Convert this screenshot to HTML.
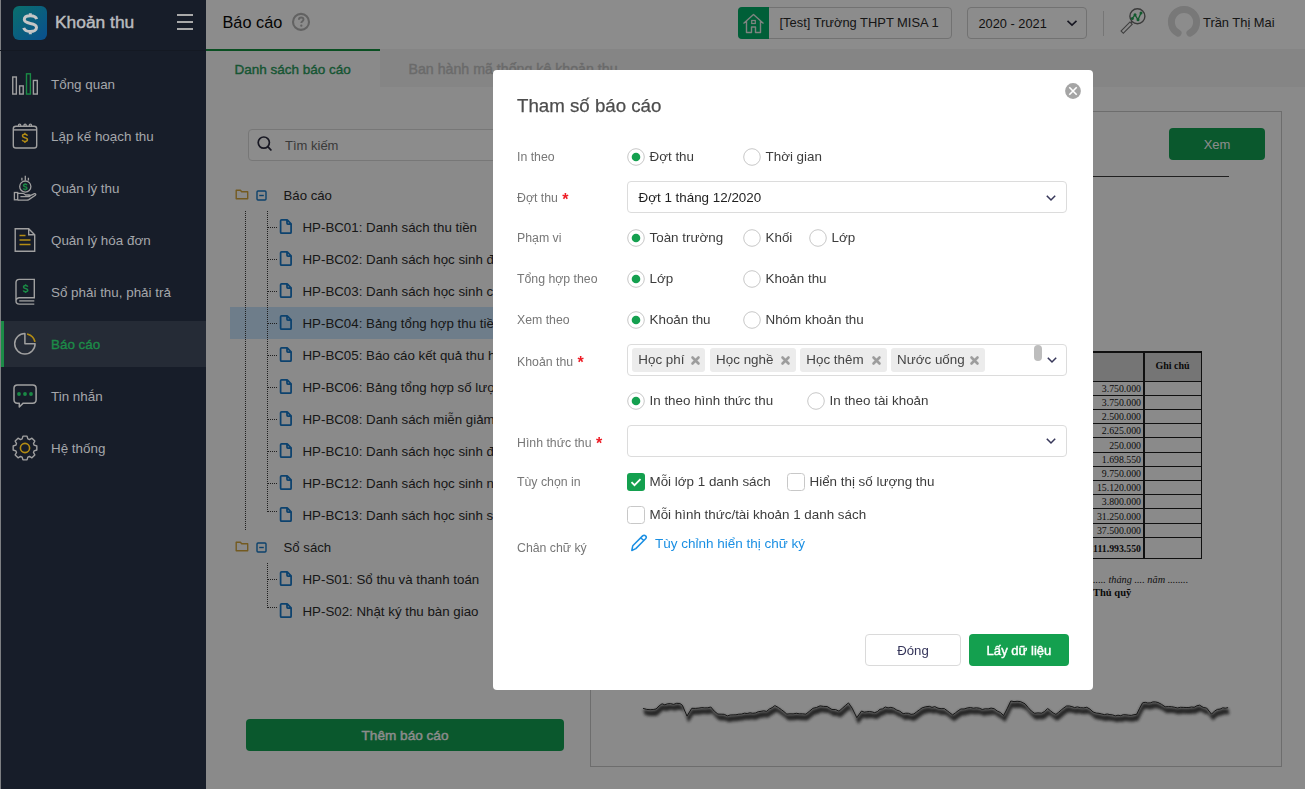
<!DOCTYPE html>
<html><head><meta charset="utf-8">
<style>
*{box-sizing:border-box;margin:0;padding:0}
html,body{width:1305px;height:789px;overflow:hidden}
body{position:relative;font-family:"Liberation Sans",sans-serif;font-size:13px;color:#212121;background:#fcfcfc}
.a{position:absolute}
.t{position:absolute;white-space:nowrap;line-height:16px}
svg{position:absolute;overflow:visible}
#sb{left:0;top:0;width:206px;height:789px;background:#171d29;z-index:5}
#sb .mi{position:absolute;left:51px;font-size:13.4px;color:#a5a7ab;line-height:16px;white-space:nowrap}
#hdr{left:206px;top:0;width:1099px;height:49px;background:#fff;box-shadow:0 1px 1px rgba(0,0,0,.10)}
#tabs{left:206px;top:49px;width:1099px;height:38px;background:#f2f2f2}
#ov{left:0;top:0;width:1305px;height:789px;background:rgba(0,0,0,.45);z-index:3}
#modal{left:493px;top:70px;width:600px;height:620px;background:#fff;border-radius:4px;z-index:10;will-change:transform}
</style></head>
<body>
<!-- SIDEBAR -->
<div id="sb" class="a">
  <div class="a" style="left:0;top:0;width:1px;height:789px;background:#7d7f82"></div>
  <div class="a" style="left:0;top:50px;width:206px;height:1px;background:#141923"></div>
  <div class="a" style="left:13px;top:6px;width:34px;height:34px;border-radius:6px;background:linear-gradient(135deg,#0a706c 0%,#0a5d80 55%,#0a4f8e 100%)"></div>
  <svg style="left:13px;top:6px" width="34" height="34" viewBox="0 0 34 34"><path d="M23.6 13.2c-0.5-2-2.8-3.4-6.3-3.4c-3.6 0-6 1.5-6 3.8c0 2.5 2.5 3.2 6 3.8c3.6 0.6 6.2 1.3 6.2 4.1c0 2.4-2.6 4-6.2 4c-3.6 0-5.9-1.4-6.6-3.6M17.3 7.2v3M17.3 25.5v2.8" fill="none" stroke="#c6c6c6" stroke-width="3"/></svg>
  <div class="t" style="left:55px;top:11px;font-size:17.4px;-webkit-text-stroke:0.45px #b9bbbf;color:#b9bbbf;line-height:22px">Khoản thu</div>
  <div class="a" style="left:177px;top:14px;width:16px;height:2.4px;background:#a9a9a9"></div>
  <div class="a" style="left:177px;top:20.8px;width:16px;height:2.4px;background:#a9a9a9"></div>
  <div class="a" style="left:177px;top:27.6px;width:16px;height:2.4px;background:#a9a9a9"></div>

  <!-- active bg -->
  <div class="a" style="left:1px;top:321px;width:205px;height:46px;background:#252b36"></div>
  <div class="a" style="left:1px;top:321px;width:3px;height:46px;background:#1b8c47"></div>

  <!-- icons -->
  <svg style="left:0;top:0" width="206" height="470" viewBox="0 0 206 470" fill="none" stroke-width="1.4">
    <!-- Tong quan bars -->
    <rect x="12.75" y="77" width="3.6" height="17.05" stroke="#a0a0a0"/>
    <rect x="19.6" y="85.9" width="3.6" height="8.15" stroke="#a0a0a0"/>
    <rect x="26.5" y="73.8" width="3.9" height="20.25" stroke="#1a8a45"/>
    <rect x="33.4" y="80.45" width="3.9" height="13.6" stroke="#a0a0a0"/>
    <!-- calendar -->
    <rect x="13.3" y="126.2" width="23.4" height="21.8" rx="2.6" stroke="#a0a0a0" stroke-width="1.4"/>
    <path d="M13.3 129.9h23.4" stroke="#a0a0a0" stroke-width="1.4"/>
    <circle cx="19.6" cy="125.3" r="1.2" stroke="#a0a0a0" stroke-width="1.2"/><circle cx="25.1" cy="125.3" r="1.2" stroke="#a0a0a0" stroke-width="1.2"/><circle cx="30.4" cy="125.3" r="1.2" stroke="#a0a0a0" stroke-width="1.2"/>
    <path transform="translate(21.9,133.6) scale(0.6)" d="M9.2 3.4C8.7 1.9 7.2 1 5 1C2.6 1 1 2.1 1 3.9C1 5.9 2.8 6.4 5 6.9C7.5 7.4 9.2 8.1 9.2 10.3C9.2 12.1 7.5 13 5 13C2.5 13 0.9 12 0.6 10.5M5 -1.6V1M5 13V15.6" stroke="#b38c14" stroke-width="1.5" vector-effect="non-scaling-stroke"/>
    <!-- hand coin -->
    <circle cx="25.3" cy="186.6" r="5.6" stroke="#a0a0a0" stroke-width="1.3"/>
    <path transform="translate(23.1,183.9) scale(0.42)" d="M9.2 3.4C8.7 1.9 7.2 1 5 1C2.6 1 1 2.1 1 3.9C1 5.9 2.8 6.4 5 6.9C7.5 7.4 9.2 8.1 9.2 10.3C9.2 12.1 7.5 13 5 13C2.5 13 0.9 12 0.6 10.5M5 -1.6V1M5 13V15.6" stroke="#1a8a45" stroke-width="1.4" vector-effect="non-scaling-stroke"/>
    <path d="M21.9 177.8v2.8M25.3 175.8v4.8M28.4 177.8v2.8" stroke="#a0a0a0" stroke-width="1.3"/>
    <rect x="14.4" y="192.5" width="3.3" height="7.3" stroke="#a0a0a0" stroke-width="1.3"/>
    <path d="M17.7 193.4h4.6c1.4 0 2.4 0.7 3.3 1.6h3.6c1.1 0 1.1 1.6 0 1.6h-8.8M28.6 196.3l5.9-2.6c1-0.4 1.8 0.9 0.9 1.5l-6.6 4.4c-0.5 0.3-1.1 0.5-1.7 0.5h-9.4" stroke="#a0a0a0" stroke-width="1.3" stroke-linejoin="round"/>
    <!-- document -->
    <path d="M15.2 228.7h13.5l6 6v16.5h-19.5z M28.7 228.7v6h6" stroke="#a0a0a0"/>
    <path d="M19.5 235.5h6M19.5 240h11M19.5 244.5h11" stroke="#b38c14" stroke-width="1.5"/>
    <!-- book -->
    <path d="M16 301V282.6c0-1.8 1.4-3.2 3.2-3.2h15.1v18.3H19.3c-1.8 0-3.3 1.5-3.3 3.3c0 1.8 1.5 3.1 3.3 3.1h15" stroke="#a0a0a0" stroke-width="1.4"/>
    <path d="M19.2 300.9h15.1" stroke="#a0a0a0" stroke-width="1.3"/>
    <path transform="translate(23,285) scale(0.52)" d="M9.2 3.4C8.7 1.9 7.2 1 5 1C2.6 1 1 2.1 1 3.9C1 5.9 2.8 6.4 5 6.9C7.5 7.4 9.2 8.1 9.2 10.3C9.2 12.1 7.5 13 5 13C2.5 13 0.9 12 0.6 10.5M5 -1.6V1M5 13V15.6" stroke="#1a8a45" stroke-width="1.5" vector-effect="non-scaling-stroke"/>
    <!-- pie -->
    <path d="M24.9 333.6a10.2 10.2 0 1 0 10.2 10.2h-10.2z" stroke="#a0a0a0" stroke-width="1.5" stroke-linejoin="round"/>
    <path d="M27.8 334.2a10 10 0 0 1 7 7" stroke="#b38c14" stroke-width="1.7" stroke-linecap="round"/>
    <!-- chat -->
    <path d="M17.4 384.95h15.3c2.1 0 3.4 1.3 3.4 3.4v11.4c0 2.1-1.3 3.4-3.4 3.4h-9.5l-3.9 3.8v-3.8h-1.9c-2.1 0-3.4-1.3-3.4-3.4v-11.4c0-2.1 1.3-3.4 3.4-3.4z" stroke="#a0a0a0" stroke-width="1.5" stroke-linejoin="round"/>
    <circle cx="19" cy="394" r="1.9" fill="#1a8a45" stroke="none"/>
    <circle cx="25" cy="394" r="1.9" fill="#1a8a45" stroke="none"/>
    <circle cx="31" cy="394" r="1.9" fill="#1a8a45" stroke="none"/>
    <!-- gear -->
    <path id="gear" d="M34.17 445.16 L36.83 445.97 L36.83 450.03 L34.17 450.84 L33.49 452.48 L34.80 454.93 L31.93 457.80 L29.48 456.49 L27.84 457.17 L27.03 459.83 L22.97 459.83 L22.16 457.17 L20.52 456.49 L18.07 457.80 L15.20 454.93 L16.51 452.48 L15.83 450.84 L13.17 450.03 L13.17 445.97 L15.83 445.16 L16.51 443.52 L15.20 441.07 L18.07 438.20 L20.52 439.51 L22.16 438.83 L22.97 436.17 L27.03 436.17 L27.84 438.83 L29.48 439.51 L31.93 438.20 L34.80 441.07 L33.49 443.52Z" stroke="#a0a0a0" stroke-width="1.4" stroke-linejoin="round"/>
    <circle cx="25" cy="448" r="4.6" stroke="#b38c14" stroke-width="1.6"/>
  </svg>

  <div class="mi" style="top:77px">Tổng quan</div>
  <div class="mi" style="top:129px">Lập kế hoạch thu</div>
  <div class="mi" style="top:181px">Quản lý thu</div>
  <div class="mi" style="top:233px">Quản lý hóa đơn</div>
  <div class="mi" style="top:285px">Sổ phải thu, phải trả</div>
  <div class="mi" style="top:337px;color:#1c8c48;-webkit-text-stroke:0.35px #1c8c48">Báo cáo</div>
  <div class="mi" style="top:389px">Tin nhắn</div>
  <div class="mi" style="top:441px">Hệ thống</div>
</div>

<!-- HEADER -->
<div id="hdr" class="a"></div>
<div class="t" style="left:222.5px;top:11px;font-size:16.3px;line-height:22px;color:#080808">Báo cáo</div>
<svg style="left:291px;top:12px" width="20" height="20" viewBox="0 0 20 20"><circle cx="10" cy="9.9" r="8" fill="none" stroke="#b3b3b3" stroke-width="2.1"/><path d="M7.9 7.7c0-1.4 1-2.2 2.3-2.2s2.3 0.8 2.3 2c0 1.7-2.2 1.7-2.2 3.6" fill="none" stroke="#b3b3b3" stroke-width="1.9"/><circle cx="10.3" cy="13.7" r="1.15" fill="#b3b3b3"/></svg>
<!-- school selector -->
<div class="a" style="left:737.5px;top:7px;width:214px;height:31.5px;border:1px solid #cfcfcf;border-radius:4px;background:#fff"></div>
<div class="a" style="left:738px;top:7px;width:31px;height:31.5px;background:#00ad67;border-radius:4px 0 0 4px"></div>
<svg style="left:738px;top:7px" width="31" height="32" viewBox="0 0 31 32"><path d="M5.5 16.5l10-9 10 9M8.5 14v11.5h5v-5.5h4v5.5h5v-11.5" fill="none" stroke="#e8efe9" stroke-width="1.4" stroke-linejoin="round"/><rect x="13.7" y="13.5" width="3.6" height="3" fill="none" stroke="#e8efe9" stroke-width="1.2"/></svg>
<div class="t" style="left:779.5px;top:14px;font-size:12.9px;line-height:18px;color:#2a2a2a">[Test] Trường THPT MISA 1</div>
<!-- year -->
<div class="a" style="left:967px;top:7px;width:120px;height:31.5px;border:1px solid #cfcfcf;border-radius:4px;background:#fff"></div>
<div class="t" style="left:978.5px;top:15px;font-size:12.8px;line-height:18px;color:#1f1f1f">2020 - 2021</div>
<svg style="left:1066px;top:19px" width="12" height="8" viewBox="0 0 12 8"><path d="M1.5 1.8l4.5 4.3 4.5-4.3" fill="none" stroke="#2b2b3f" stroke-width="1.6"/></svg>
<div class="a" style="left:1103px;top:11px;width:1px;height:25px;background:#d8d8d8"></div>
<!-- search chart icon -->
<svg style="left:1110px;top:2px" width="40" height="40" viewBox="0 0 40 40"><circle cx="27.4" cy="14.2" r="7.5" fill="none" stroke="#6b6b6b" stroke-width="1.4"/><path d="M22.3 19.3l-1.3 1.3" stroke="#6b6b6b" stroke-width="1.6"/><rect x="-1.6" y="0" width="3.2" height="12.6" fill="none" stroke="#737373" stroke-width="1.1" transform="translate(21.1,21.2) rotate(45)"/><path d="M22.3 16.4L25 12.8L28 17.8L31 11" fill="none" stroke="#22a352" stroke-width="1.3"/><circle cx="22.3" cy="16.4" r="1.5" fill="#22a352"/><circle cx="25" cy="12.8" r="1.5" fill="#22a352"/><circle cx="28" cy="17.8" r="1.5" fill="#22a352"/><circle cx="31" cy="11" r="1.5" fill="#22a352"/></svg>
<!-- avatar -->
<svg style="left:1167px;top:6px" width="34" height="32" viewBox="0 0 34 32"><path d="M11.08 27.13A12.6 12.6 0 1 1 22.92 27.13" fill="none" stroke="#dadada" stroke-width="7" stroke-linecap="round"/></svg>
<div class="t" style="left:1203px;top:14px;font-size:12.9px;line-height:18px;color:#2a2a2a">Trần Thị Mai</div>

<!-- TABS -->
<div id="tabs" class="a"></div>
<div class="a" style="left:206px;top:49px;width:174px;height:38px;background:#fcfcfc;border-top:2px solid #13913f"></div>
<div class="t" style="left:234.5px;top:62px;font-size:13.5px;-webkit-text-stroke:0.4px #2a9b5c;color:#2a9b5c">Danh sách báo cáo</div>
<div class="t" style="left:408.5px;top:61px;font-size:14.2px;-webkit-text-stroke:0.4px #c2c2c2;color:#c2c2c2">Ban hành mã thống kê khoản thu</div>
<div class="a" style="left:206px;top:87px;width:1099px;height:702px;background:#fcfcfc"></div>

<!-- LEFT PANEL -->
<div class="a" style="left:248px;top:129px;width:330px;height:32px;border:1px solid #d9d9d9;border-radius:4px;background:#fff"></div>
<svg style="left:256px;top:135px" width="18" height="18" viewBox="0 0 18 18"><circle cx="7.8" cy="7.6" r="5.6" fill="none" stroke="#2d2d40" stroke-width="1.7"/><path d="M11.8 11.7l3.6 3.8" stroke="#2d2d40" stroke-width="1.8"/></svg>
<div class="t" style="left:285px;top:137.6px;font-size:13px;color:#6b6b6b">Tìm kiếm</div>
<div class="a" style="left:230px;top:307px;width:300px;height:32px;background:#c8e4fb"></div>
<svg style="left:235px;top:189px" width="14" height="11" viewBox="0 0 14 11"><path d="M1.2 1.2h4.2l1.3 1.5h6v7.1H1.2z" fill="none" stroke="#d1a43b" stroke-width="1.4" stroke-linejoin="round"/></svg>
<svg style="left:256px;top:190px" width="11" height="11" viewBox="0 0 11 11"><rect x="1" y="1" width="9" height="9" rx="1" fill="none" stroke="#1677c4" stroke-width="1.4"/><path d="M3.2 5.5h4.6" stroke="#1677c4" stroke-width="1.4"/></svg>
<div class="t" style="left:283.5px;top:187.7px;font-size:13.2px;color:#2b2b2b">Báo cáo</div>
<svg style="left:235px;top:541px" width="14" height="11" viewBox="0 0 14 11"><path d="M1.2 1.2h4.2l1.3 1.5h6v7.1H1.2z" fill="none" stroke="#d1a43b" stroke-width="1.4" stroke-linejoin="round"/></svg>
<svg style="left:256px;top:542px" width="11" height="11" viewBox="0 0 11 11"><rect x="1" y="1" width="9" height="9" rx="1" fill="none" stroke="#1677c4" stroke-width="1.4"/><path d="M3.2 5.5h4.6" stroke="#1677c4" stroke-width="1.4"/></svg>
<div class="t" style="left:283.5px;top:539.7px;font-size:13.2px;color:#2b2b2b">Sổ sách</div>
<div class="a" style="left:245px;top:211px;width:1px;height:320px;background-image:linear-gradient(#3a3a3a 50%,transparent 50%);background-size:1px 2px"></div>
<div class="a" style="left:267px;top:211px;width:1px;height:301px;background-image:linear-gradient(#3a3a3a 50%,transparent 50%);background-size:1px 2px"></div>
<div class="a" style="left:267px;top:563px;width:1px;height:45px;background-image:linear-gradient(#3a3a3a 50%,transparent 50%);background-size:1px 2px"></div>
<div class="a" style="left:268px;top:227px;width:9px;height:1px;background-image:linear-gradient(90deg,#3a3a3a 50%,transparent 50%);background-size:2px 1px"></div>
<svg style="left:279px;top:218px" width="14" height="17" viewBox="0 0 14 17"><path d="M2.6 1.8h5.6l3.9 4v8.4c0 0.6-0.4 1-1 1H2.6c-0.6 0-1-0.4-1-1V2.8c0-0.6 0.4-1 1-1zM8 2v3.2c0 0.5 0.3 0.8 0.8 0.8h3.2" fill="none" stroke="#1778c8" stroke-width="1.75" stroke-linejoin="round"/></svg>
<div class="t" style="left:302.5px;top:219.7px;font-size:13.3px;color:#2b2b2b">HP-BC01: Danh sách thu tiền</div>
<div class="a" style="left:268px;top:259px;width:9px;height:1px;background-image:linear-gradient(90deg,#3a3a3a 50%,transparent 50%);background-size:2px 1px"></div>
<svg style="left:279px;top:250px" width="14" height="17" viewBox="0 0 14 17"><path d="M2.6 1.8h5.6l3.9 4v8.4c0 0.6-0.4 1-1 1H2.6c-0.6 0-1-0.4-1-1V2.8c0-0.6 0.4-1 1-1zM8 2v3.2c0 0.5 0.3 0.8 0.8 0.8h3.2" fill="none" stroke="#1778c8" stroke-width="1.75" stroke-linejoin="round"/></svg>
<div class="t" style="left:302.5px;top:251.7px;font-size:13.3px;color:#2b2b2b">HP-BC02: Danh sách học sinh đã nộp tiền</div>
<div class="a" style="left:268px;top:291px;width:9px;height:1px;background-image:linear-gradient(90deg,#3a3a3a 50%,transparent 50%);background-size:2px 1px"></div>
<svg style="left:279px;top:282px" width="14" height="17" viewBox="0 0 14 17"><path d="M2.6 1.8h5.6l3.9 4v8.4c0 0.6-0.4 1-1 1H2.6c-0.6 0-1-0.4-1-1V2.8c0-0.6 0.4-1 1-1zM8 2v3.2c0 0.5 0.3 0.8 0.8 0.8h3.2" fill="none" stroke="#1778c8" stroke-width="1.75" stroke-linejoin="round"/></svg>
<div class="t" style="left:302.5px;top:283.7px;font-size:13.3px;color:#2b2b2b">HP-BC03: Danh sách học sinh chưa nộp tiền</div>
<div class="a" style="left:268px;top:323px;width:9px;height:1px;background-image:linear-gradient(90deg,#3a3a3a 50%,transparent 50%);background-size:2px 1px"></div>
<svg style="left:279px;top:314px" width="14" height="17" viewBox="0 0 14 17"><path d="M2.6 1.8h5.6l3.9 4v8.4c0 0.6-0.4 1-1 1H2.6c-0.6 0-1-0.4-1-1V2.8c0-0.6 0.4-1 1-1zM8 2v3.2c0 0.5 0.3 0.8 0.8 0.8h3.2" fill="none" stroke="#1778c8" stroke-width="1.75" stroke-linejoin="round"/></svg>
<div class="t" style="left:302.5px;top:315.7px;font-size:13.3px;color:#2b2b2b">HP-BC04: Bảng tổng hợp thu tiền</div>
<div class="a" style="left:268px;top:355px;width:9px;height:1px;background-image:linear-gradient(90deg,#3a3a3a 50%,transparent 50%);background-size:2px 1px"></div>
<svg style="left:279px;top:346px" width="14" height="17" viewBox="0 0 14 17"><path d="M2.6 1.8h5.6l3.9 4v8.4c0 0.6-0.4 1-1 1H2.6c-0.6 0-1-0.4-1-1V2.8c0-0.6 0.4-1 1-1zM8 2v3.2c0 0.5 0.3 0.8 0.8 0.8h3.2" fill="none" stroke="#1778c8" stroke-width="1.75" stroke-linejoin="round"/></svg>
<div class="t" style="left:302.5px;top:347.7px;font-size:13.3px;color:#2b2b2b">HP-BC05: Báo cáo kết quả thu học phí</div>
<div class="a" style="left:268px;top:387px;width:9px;height:1px;background-image:linear-gradient(90deg,#3a3a3a 50%,transparent 50%);background-size:2px 1px"></div>
<svg style="left:279px;top:378px" width="14" height="17" viewBox="0 0 14 17"><path d="M2.6 1.8h5.6l3.9 4v8.4c0 0.6-0.4 1-1 1H2.6c-0.6 0-1-0.4-1-1V2.8c0-0.6 0.4-1 1-1zM8 2v3.2c0 0.5 0.3 0.8 0.8 0.8h3.2" fill="none" stroke="#1778c8" stroke-width="1.75" stroke-linejoin="round"/></svg>
<div class="t" style="left:302.5px;top:379.7px;font-size:13.3px;color:#2b2b2b">HP-BC06: Bảng tổng hợp số lượng</div>
<div class="a" style="left:268px;top:419px;width:9px;height:1px;background-image:linear-gradient(90deg,#3a3a3a 50%,transparent 50%);background-size:2px 1px"></div>
<svg style="left:279px;top:410px" width="14" height="17" viewBox="0 0 14 17"><path d="M2.6 1.8h5.6l3.9 4v8.4c0 0.6-0.4 1-1 1H2.6c-0.6 0-1-0.4-1-1V2.8c0-0.6 0.4-1 1-1zM8 2v3.2c0 0.5 0.3 0.8 0.8 0.8h3.2" fill="none" stroke="#1778c8" stroke-width="1.75" stroke-linejoin="round"/></svg>
<div class="t" style="left:302.5px;top:411.7px;font-size:13.3px;color:#2b2b2b">HP-BC08: Danh sách miễn giảm</div>
<div class="a" style="left:268px;top:451px;width:9px;height:1px;background-image:linear-gradient(90deg,#3a3a3a 50%,transparent 50%);background-size:2px 1px"></div>
<svg style="left:279px;top:442px" width="14" height="17" viewBox="0 0 14 17"><path d="M2.6 1.8h5.6l3.9 4v8.4c0 0.6-0.4 1-1 1H2.6c-0.6 0-1-0.4-1-1V2.8c0-0.6 0.4-1 1-1zM8 2v3.2c0 0.5 0.3 0.8 0.8 0.8h3.2" fill="none" stroke="#1778c8" stroke-width="1.75" stroke-linejoin="round"/></svg>
<div class="t" style="left:302.5px;top:443.7px;font-size:13.3px;color:#2b2b2b">HP-BC10: Danh sách học sinh đã nộp</div>
<div class="a" style="left:268px;top:483px;width:9px;height:1px;background-image:linear-gradient(90deg,#3a3a3a 50%,transparent 50%);background-size:2px 1px"></div>
<svg style="left:279px;top:474px" width="14" height="17" viewBox="0 0 14 17"><path d="M2.6 1.8h5.6l3.9 4v8.4c0 0.6-0.4 1-1 1H2.6c-0.6 0-1-0.4-1-1V2.8c0-0.6 0.4-1 1-1zM8 2v3.2c0 0.5 0.3 0.8 0.8 0.8h3.2" fill="none" stroke="#1778c8" stroke-width="1.75" stroke-linejoin="round"/></svg>
<div class="t" style="left:302.5px;top:475.7px;font-size:13.3px;color:#2b2b2b">HP-BC12: Danh sách học sinh nợ</div>
<div class="a" style="left:268px;top:511px;width:9px;height:1px;background-image:linear-gradient(90deg,#3a3a3a 50%,transparent 50%);background-size:2px 1px"></div>
<svg style="left:279px;top:506px" width="14" height="17" viewBox="0 0 14 17"><path d="M2.6 1.8h5.6l3.9 4v8.4c0 0.6-0.4 1-1 1H2.6c-0.6 0-1-0.4-1-1V2.8c0-0.6 0.4-1 1-1zM8 2v3.2c0 0.5 0.3 0.8 0.8 0.8h3.2" fill="none" stroke="#1778c8" stroke-width="1.75" stroke-linejoin="round"/></svg>
<div class="t" style="left:302.5px;top:507.7px;font-size:13.3px;color:#2b2b2b">HP-BC13: Danh sách học sinh sử dụng</div>
<div class="a" style="left:268px;top:579px;width:9px;height:1px;background-image:linear-gradient(90deg,#3a3a3a 50%,transparent 50%);background-size:2px 1px"></div>
<svg style="left:279px;top:570px" width="14" height="17" viewBox="0 0 14 17"><path d="M2.6 1.8h5.6l3.9 4v8.4c0 0.6-0.4 1-1 1H2.6c-0.6 0-1-0.4-1-1V2.8c0-0.6 0.4-1 1-1zM8 2v3.2c0 0.5 0.3 0.8 0.8 0.8h3.2" fill="none" stroke="#1778c8" stroke-width="1.75" stroke-linejoin="round"/></svg>
<div class="t" style="left:302.5px;top:571.7px;font-size:13.3px;color:#2b2b2b">HP-S01: Sổ thu và thanh toán</div>
<div class="a" style="left:268px;top:607px;width:9px;height:1px;background-image:linear-gradient(90deg,#3a3a3a 50%,transparent 50%);background-size:2px 1px"></div>
<svg style="left:279px;top:602px" width="14" height="17" viewBox="0 0 14 17"><path d="M2.6 1.8h5.6l3.9 4v8.4c0 0.6-0.4 1-1 1H2.6c-0.6 0-1-0.4-1-1V2.8c0-0.6 0.4-1 1-1zM8 2v3.2c0 0.5 0.3 0.8 0.8 0.8h3.2" fill="none" stroke="#1778c8" stroke-width="1.75" stroke-linejoin="round"/></svg>
<div class="t" style="left:302.5px;top:603.7px;font-size:13.3px;color:#2b2b2b">HP-S02: Nhật ký thu bàn giao</div>
<div class="a" style="left:246px;top:719px;width:318px;height:32px;background:#13a052;border-radius:4px"></div>
<div class="t" style="left:246px;top:727.7px;width:318px;text-align:center;font-size:13.6px;-webkit-text-stroke:0.4px #fff;color:#fff">Thêm báo cáo</div>
<!-- RIGHT PANEL -->
<div class="a" style="left:590px;top:111px;width:692px;height:656px;border:1px solid #c6c6c6;background:#fcfcfc"></div>
<div class="a" style="left:1169px;top:128px;width:96px;height:32px;background:#13a052;border-radius:4px"></div>
<div class="t" style="left:1169px;top:137px;width:96px;text-align:center;font-size:13px;color:#fff">Xem</div>
<div class="a" style="left:643px;top:176px;width:586px;height:1px;background:#3a3a3a"></div>
<div class="a" style="left:1080px;top:352px;width:122px;height:29px;background:#d6d6d6"></div>
<div class="a" style="left:1080px;top:351px;width:122px;height:1.5px;background:#1e1e1e"></div>
<div class="a" style="left:1080px;top:381px;width:122px;height:1.3px;background:#1e1e1e"></div>
<div class="a" style="left:1080px;top:395px;width:122px;height:1.3px;background:#1e1e1e"></div>
<div class="a" style="left:1080px;top:409px;width:122px;height:1.3px;background:#1e1e1e"></div>
<div class="a" style="left:1080px;top:423px;width:122px;height:1.3px;background:#1e1e1e"></div>
<div class="a" style="left:1080px;top:437px;width:122px;height:1.3px;background:#1e1e1e"></div>
<div class="a" style="left:1080px;top:452px;width:122px;height:1.3px;background:#1e1e1e"></div>
<div class="a" style="left:1080px;top:466px;width:122px;height:1.3px;background:#1e1e1e"></div>
<div class="a" style="left:1080px;top:480px;width:122px;height:1.3px;background:#1e1e1e"></div>
<div class="a" style="left:1080px;top:494px;width:122px;height:1.3px;background:#1e1e1e"></div>
<div class="a" style="left:1080px;top:508px;width:122px;height:1.3px;background:#1e1e1e"></div>
<div class="a" style="left:1080px;top:523px;width:122px;height:1.3px;background:#1e1e1e"></div>
<div class="a" style="left:1080px;top:537px;width:122px;height:1.3px;background:#1e1e1e"></div>
<div class="a" style="left:1080px;top:558px;width:122px;height:1.3px;background:#1e1e1e"></div>
<div class="a" style="left:1143px;top:351px;width:1.6px;height:208px;background:#1e1e1e"></div>
<div class="a" style="left:1200.5px;top:351px;width:1.3px;height:208.3px;background:#1e1e1e"></div>
<div class="t" style="left:1144px;top:358px;width:57px;text-align:center;font-family:'Liberation Serif';font-weight:bold;font-size:10px;color:#111">Ghi chú</div>
<div class="t" style="left:1060px;top:381.2px;width:81px;text-align:right;font-family:'Liberation Serif';font-size:9.8px;color:#161616">3.750.000</div>
<div class="t" style="left:1060px;top:395.2px;width:81px;text-align:right;font-family:'Liberation Serif';font-size:9.8px;color:#161616">3.750.000</div>
<div class="t" style="left:1060px;top:409.2px;width:81px;text-align:right;font-family:'Liberation Serif';font-size:9.8px;color:#161616">2.500.000</div>
<div class="t" style="left:1060px;top:423.2px;width:81px;text-align:right;font-family:'Liberation Serif';font-size:9.8px;color:#161616">2.625.000</div>
<div class="t" style="left:1060px;top:437.7px;width:81px;text-align:right;font-family:'Liberation Serif';font-size:9.8px;color:#161616">250.000</div>
<div class="t" style="left:1060px;top:452.2px;width:81px;text-align:right;font-family:'Liberation Serif';font-size:9.8px;color:#161616">1.698.550</div>
<div class="t" style="left:1060px;top:466.2px;width:81px;text-align:right;font-family:'Liberation Serif';font-size:9.8px;color:#161616">9.750.000</div>
<div class="t" style="left:1060px;top:480.2px;width:81px;text-align:right;font-family:'Liberation Serif';font-size:9.8px;color:#161616">15.120.000</div>
<div class="t" style="left:1060px;top:494.2px;width:81px;text-align:right;font-family:'Liberation Serif';font-size:9.8px;color:#161616">3.800.000</div>
<div class="t" style="left:1060px;top:508.7px;width:81px;text-align:right;font-family:'Liberation Serif';font-size:9.8px;color:#161616">31.250.000</div>
<div class="t" style="left:1060px;top:523.2px;width:81px;text-align:right;font-family:'Liberation Serif';font-size:9.8px;color:#161616">37.500.000</div>
<div class="t" style="left:1060px;top:540.7px;width:81px;text-align:right;font-family:'Liberation Serif';font-weight:bold;font-size:9.8px;color:#161616">111.993.550</div>
<div class="t" style="left:1093px;top:572px;font-family:'Liberation Serif';font-style:italic;font-size:10.3px;color:#222">..... tháng .... năm ........</div>
<div class="t" style="left:1093px;top:585px;font-family:'Liberation Serif';font-weight:bold;font-size:10.5px;color:#111">Thủ quỹ</div>
<svg style="left:600px;top:690px" width="660" height="40" viewBox="0 0 660 40"><defs><filter id="bl" x="-5%" y="-50%" width="110%" height="200%"><feGaussianBlur stdDeviation="1.5"/></filter></defs><polygon points="43.1,18.4 46.7,19.4 50.2,19.7 53.2,19.5 56.1,19.0 59.0,16.0 62.0,13.8 64.8,14.8 67.6,13.8 70.4,13.6 73.6,14.4 76.7,13.3 79.9,13.5 82.3,15.2 87.0,26.1 91.8,18.3 95.3,18.4 98.9,18.1 101.9,17.6 104.8,17.9 107.8,17.8 110.8,17.0 114.3,21.2 117.9,24.1 121.1,24.2 124.2,24.3 127.4,25.9 130.2,25.0 133.1,24.9 135.9,24.8 138.8,24.2 141.6,24.1 144.4,23.2 147.2,23.5 150.0,22.8 152.7,23.3 155.5,23.0 158.3,21.7 161.1,21.3 163.8,20.8 166.6,21.4 169.4,19.0 172.1,17.7 174.9,15.6 178.5,17.6 181.3,19.6 184.0,21.7 186.8,24.1 190.0,23.8 193.1,23.9 196.3,23.3 199.5,23.8 202.6,23.8 205.8,24.2 209.3,21.4 212.9,18.3 216.5,17.5 220.0,15.9 223.5,16.4 227.1,16.5 231.9,19.5 235.5,19.5 239.0,21.2 242.2,18.4 245.3,15.6 248.5,12.9 252.1,18.1 256.8,27.7 261.6,21.0 264.2,22.2 266.8,21.8 269.5,21.5 272.1,21.9 274.7,22.7 277.4,21.6 280.0,19.3 282.6,18.9 285.3,17.0 288.1,17.9 290.8,17.4 293.6,18.1 296.8,20.1 299.9,21.2 303.1,23.7 305.8,23.2 308.5,23.3 311.1,24.4 313.8,24.0 316.6,21.9 319.4,19.8 322.2,17.8 325.8,16.8 329.3,16.3 332.0,17.4 334.8,16.6 338.0,18.2 341.1,18.7 344.3,18.6 347.1,20.7 349.8,22.8 352.6,24.9 355.4,22.9 358.1,20.8 360.9,19.0 364.1,19.0 367.2,18.0 370.4,17.5 373.4,18.2 376.3,17.8 379.3,18.2 382.3,19.5 385.2,18.8 388.2,18.9 391.1,18.1 394.1,18.7 397.3,21.1 400.4,22.5 403.6,25.6 407.2,18.7 410.8,11.0 414.0,11.6 417.1,11.3 420.3,11.5 425.0,13.8 428.2,17.6 431.3,21.0 434.5,23.3 438.0,22.9 441.6,23.2 444.6,21.5 447.6,18.5 450.4,20.7 453.1,22.9 455.9,24.4 458.6,22.3 461.2,20.0 463.9,17.9 466.6,16.0 469.3,16.0 471.9,16.6 474.6,17.6 477.3,16.9 480.5,17.7 483.6,17.9 486.8,17.3 490.0,19.2 493.1,22.0 496.3,23.1 499.0,23.3 501.7,24.0 504.4,24.6 507.2,24.0 509.9,24.6 512.6,24.9 515.3,25.9 518.0,25.2 520.7,25.7 523.3,24.7 526.0,24.8 528.7,25.2 531.3,25.4 534.0,24.7 536.7,24.3 539.7,18.2 542.6,12.8 545.2,12.3 547.7,13.0 550.3,12.9 552.9,11.9 555.4,11.9 558.0,12.5 561.6,14.4 565.2,16.8 568.4,16.6 571.5,16.7 574.7,17.3 577.5,18.0 580.4,17.3 583.2,17.4 586.1,17.5 588.9,17.5 591.6,17.0 594.2,17.3 596.9,15.8 599.6,15.2 603.2,17.4 606.7,18.1 611.5,24.2 614.5,21.1 617.4,19.4 620.1,19.1 622.8,17.8 625.4,18.2 628.1,17.6 629.6,23.2 626.9,23.8 624.3,23.4 621.6,24.7 618.9,25.0 616.0,26.7 613.0,29.8 608.2,23.7 604.7,23.0 601.1,20.8 598.4,21.4 595.7,22.9 593.1,22.6 590.4,23.1 587.6,23.1 584.7,23.0 581.9,22.9 579.0,23.6 576.2,22.9 573.0,22.3 569.9,22.2 566.7,22.4 563.1,20.0 559.5,18.1 556.9,17.5 554.4,17.5 551.8,18.5 549.2,18.6 546.7,17.9 544.1,18.4 541.2,23.8 538.2,29.9 535.5,30.3 532.8,31.0 530.2,30.8 527.5,30.4 524.8,30.3 522.2,31.3 519.5,30.8 516.8,31.5 514.1,30.5 511.4,30.2 508.7,29.6 505.9,30.2 503.2,29.6 500.5,28.9 497.8,28.7 494.6,27.6 491.5,24.8 488.3,22.9 485.1,23.5 482.0,23.3 478.8,22.5 476.1,23.2 473.4,22.2 470.8,21.6 468.1,21.6 465.4,23.5 462.7,25.6 460.1,27.9 457.4,30.0 454.6,28.5 451.9,26.3 449.1,24.1 446.1,27.1 443.1,28.8 439.5,28.5 436.0,28.9 432.8,26.6 429.7,23.2 426.5,19.4 421.8,17.1 418.6,16.9 415.5,17.2 412.3,16.6 408.7,24.3 405.1,31.2 401.9,28.1 398.8,26.7 395.6,24.3 392.6,23.7 389.7,24.5 386.7,24.4 383.8,25.1 380.8,23.8 377.8,23.4 374.9,23.8 371.9,23.1 368.7,23.6 365.6,24.6 362.4,24.6 359.6,26.4 356.9,28.5 354.1,30.5 351.3,28.4 348.6,26.3 345.8,24.2 342.6,24.3 339.5,23.8 336.3,22.2 333.5,23.0 330.8,21.9 327.3,22.4 323.7,23.4 320.9,25.4 318.1,27.5 315.3,29.6 312.6,30.0 310.0,28.9 307.3,28.8 304.6,29.3 301.4,26.8 298.3,25.7 295.1,23.7 292.3,23.0 289.6,23.5 286.8,22.6 284.1,24.5 281.5,24.9 278.9,27.2 276.2,28.3 273.6,27.5 271.0,27.1 268.3,27.4 265.7,27.8 263.1,26.6 258.3,33.3 253.6,23.7 250.0,18.5 246.8,21.2 243.7,24.0 240.5,26.8 237.0,25.1 233.4,25.1 228.6,22.1 225.0,22.0 221.5,21.5 218.0,23.1 214.4,23.9 210.8,27.0 207.3,29.8 204.1,29.4 201.0,29.4 197.8,28.9 194.6,29.5 191.5,29.4 188.3,29.7 185.5,27.3 182.8,25.2 180.0,23.2 176.4,21.2 173.6,23.3 170.9,24.6 168.1,27.0 165.3,26.4 162.6,26.9 159.8,27.3 157.0,28.6 154.2,28.9 151.5,28.4 148.7,29.1 145.9,28.8 143.1,29.7 140.3,29.8 137.4,30.4 134.6,30.5 131.7,30.6 128.9,31.5 125.7,29.9 122.6,29.8 119.4,29.7 115.8,26.8 112.3,22.6 109.3,23.4 106.3,23.5 103.4,23.2 100.4,23.7 96.8,24.0 93.3,23.9 88.5,31.7 83.8,20.8 81.4,19.1 78.2,18.9 75.1,20.0 71.9,19.2 69.1,19.4 66.3,20.4 63.5,19.4 60.5,21.6 57.6,24.6 54.7,25.1 51.7,25.3 48.2,25.0 44.6,24.0" fill="#222" filter="url(#bl)" opacity="0.85" transform="translate(0,0.8)"/><polyline points="43.1,18.4 46.7,19.4 50.2,19.7 53.2,19.5 56.1,19.0 59.0,16.0 62.0,13.8 64.8,14.8 67.6,13.8 70.4,13.6 73.6,14.4 76.7,13.3 79.9,13.5 82.3,15.2 87.0,26.1 91.8,18.3 95.3,18.4 98.9,18.1 101.9,17.6 104.8,17.9 107.8,17.8 110.8,17.0 114.3,21.2 117.9,24.1 121.1,24.2 124.2,24.3 127.4,25.9 130.2,25.0 133.1,24.9 135.9,24.8 138.8,24.2 141.6,24.1 144.4,23.2 147.2,23.5 150.0,22.8 152.7,23.3 155.5,23.0 158.3,21.7 161.1,21.3 163.8,20.8 166.6,21.4 169.4,19.0 172.1,17.7 174.9,15.6 178.5,17.6 181.3,19.6 184.0,21.7 186.8,24.1 190.0,23.8 193.1,23.9 196.3,23.3 199.5,23.8 202.6,23.8 205.8,24.2 209.3,21.4 212.9,18.3 216.5,17.5 220.0,15.9 223.5,16.4 227.1,16.5 231.9,19.5 235.5,19.5 239.0,21.2 242.2,18.4 245.3,15.6 248.5,12.9 252.1,18.1 256.8,27.7 261.6,21.0 264.2,22.2 266.8,21.8 269.5,21.5 272.1,21.9 274.7,22.7 277.4,21.6 280.0,19.3 282.6,18.9 285.3,17.0 288.1,17.9 290.8,17.4 293.6,18.1 296.8,20.1 299.9,21.2 303.1,23.7 305.8,23.2 308.5,23.3 311.1,24.4 313.8,24.0 316.6,21.9 319.4,19.8 322.2,17.8 325.8,16.8 329.3,16.3 332.0,17.4 334.8,16.6 338.0,18.2 341.1,18.7 344.3,18.6 347.1,20.7 349.8,22.8 352.6,24.9 355.4,22.9 358.1,20.8 360.9,19.0 364.1,19.0 367.2,18.0 370.4,17.5 373.4,18.2 376.3,17.8 379.3,18.2 382.3,19.5 385.2,18.8 388.2,18.9 391.1,18.1 394.1,18.7 397.3,21.1 400.4,22.5 403.6,25.6 407.2,18.7 410.8,11.0 414.0,11.6 417.1,11.3 420.3,11.5 425.0,13.8 428.2,17.6 431.3,21.0 434.5,23.3 438.0,22.9 441.6,23.2 444.6,21.5 447.6,18.5 450.4,20.7 453.1,22.9 455.9,24.4 458.6,22.3 461.2,20.0 463.9,17.9 466.6,16.0 469.3,16.0 471.9,16.6 474.6,17.6 477.3,16.9 480.5,17.7 483.6,17.9 486.8,17.3 490.0,19.2 493.1,22.0 496.3,23.1 499.0,23.3 501.7,24.0 504.4,24.6 507.2,24.0 509.9,24.6 512.6,24.9 515.3,25.9 518.0,25.2 520.7,25.7 523.3,24.7 526.0,24.8 528.7,25.2 531.3,25.4 534.0,24.7 536.7,24.3 539.7,18.2 542.6,12.8 545.2,12.3 547.7,13.0 550.3,12.9 552.9,11.9 555.4,11.9 558.0,12.5 561.6,14.4 565.2,16.8 568.4,16.6 571.5,16.7 574.7,17.3 577.5,18.0 580.4,17.3 583.2,17.4 586.1,17.5 588.9,17.5 591.6,17.0 594.2,17.3 596.9,15.8 599.6,15.2 603.2,17.4 606.7,18.1 611.5,24.2 614.5,21.1 617.4,19.4 620.1,19.1 622.8,17.8 625.4,18.2 628.1,17.6" fill="none" stroke="#2a2a2a" stroke-width="1"/></svg>
<div id="ov" class="a"></div>
<div id="modal" class="a">
<div class="t" style="left:24px;top:23.6px;font-size:18.7px;line-height:24px;color:#4d4d4d;-webkit-text-stroke:0.25px #4d4d4d">Tham số báo cáo</div>
<svg style="left:571px;top:11.5px" width="18" height="18" viewBox="0 0 18 18"><circle cx="9" cy="9" r="7.9" fill="#a5a5a5"/><path d="M5.3 5.3l7.4 7.4M12.7 5.3l-7.4 7.4" stroke="#fff" stroke-width="1.6"/></svg>
<div class="t" style="left:24px;top:78.6px;font-size:12.3px;color:#777">In theo</div>
<div class="t" style="left:24px;top:119.4px;font-size:12.3px;color:#777">Đợt thu <span style="color:#ee1c25;font-size:16px;font-weight:bold;position:relative;top:2.5px;margin-left:1px">*</span></div>
<div class="t" style="left:24px;top:159.6px;font-size:12.3px;color:#777">Phạm vi</div>
<div class="t" style="left:24px;top:200.6px;font-size:12.3px;color:#777">Tổng hợp theo</div>
<div class="t" style="left:24px;top:242.2px;font-size:12.3px;color:#777">Xem theo</div>
<div class="t" style="left:24px;top:282.7px;font-size:12.3px;color:#777">Khoản thu <span style="color:#ee1c25;font-size:16px;font-weight:bold;position:relative;top:2.5px;margin-left:1px">*</span></div>
<div class="t" style="left:24px;top:363.9px;font-size:12.3px;color:#777">Hình thức thu <span style="color:#ee1c25;font-size:16px;font-weight:bold;position:relative;top:2.5px;margin-left:1px">*</span></div>
<div class="t" style="left:24px;top:403.7px;font-size:12.3px;color:#777">Tùy chọn in</div>
<div class="t" style="left:24px;top:469.5px;font-size:12.3px;color:#777">Chân chữ ký</div>
<svg style="left:134px;top:78px" width="18" height="18" viewBox="0 0 18 18"><circle cx="9" cy="9" r="8.3" fill="#fff" stroke="#c8c8c8" stroke-width="1"/><circle cx="9" cy="9" r="4.3" fill="#14a04f"/></svg><div class="t" style="left:156.5px;top:78.5px;font-size:13.4px;color:#3c3c3c">Đợt thu</div>
<svg style="left:250px;top:78px" width="18" height="18" viewBox="0 0 18 18"><circle cx="9" cy="9" r="8.3" fill="#fff" stroke="#c8c8c8" stroke-width="1"/></svg><div class="t" style="left:272.5px;top:78.5px;font-size:13.4px;color:#3c3c3c">Thời gian</div>
<svg style="left:134px;top:158.6px" width="18" height="18" viewBox="0 0 18 18"><circle cx="9" cy="9" r="8.3" fill="#fff" stroke="#c8c8c8" stroke-width="1"/><circle cx="9" cy="9" r="4.3" fill="#14a04f"/></svg><div class="t" style="left:156.5px;top:159.9px;font-size:13.4px;color:#3c3c3c">Toàn trường</div>
<svg style="left:250px;top:158.6px" width="18" height="18" viewBox="0 0 18 18"><circle cx="9" cy="9" r="8.3" fill="#fff" stroke="#c8c8c8" stroke-width="1"/></svg><div class="t" style="left:272.5px;top:159.9px;font-size:13.4px;color:#3c3c3c">Khối</div>
<svg style="left:316px;top:158.6px" width="18" height="18" viewBox="0 0 18 18"><circle cx="9" cy="9" r="8.3" fill="#fff" stroke="#c8c8c8" stroke-width="1"/></svg><div class="t" style="left:338.5px;top:159.9px;font-size:13.4px;color:#3c3c3c">Lớp</div>
<svg style="left:134px;top:199.89999999999998px" width="18" height="18" viewBox="0 0 18 18"><circle cx="9" cy="9" r="8.3" fill="#fff" stroke="#c8c8c8" stroke-width="1"/><circle cx="9" cy="9" r="4.3" fill="#14a04f"/></svg><div class="t" style="left:156.5px;top:201.2px;font-size:13.4px;color:#3c3c3c">Lớp</div>
<svg style="left:250px;top:199.89999999999998px" width="18" height="18" viewBox="0 0 18 18"><circle cx="9" cy="9" r="8.3" fill="#fff" stroke="#c8c8c8" stroke-width="1"/></svg><div class="t" style="left:272.5px;top:201.2px;font-size:13.4px;color:#3c3c3c">Khoản thu</div>
<svg style="left:134px;top:240.89999999999998px" width="18" height="18" viewBox="0 0 18 18"><circle cx="9" cy="9" r="8.3" fill="#fff" stroke="#c8c8c8" stroke-width="1"/><circle cx="9" cy="9" r="4.3" fill="#14a04f"/></svg><div class="t" style="left:156.5px;top:242.2px;font-size:13.4px;color:#3c3c3c">Khoản thu</div>
<svg style="left:250px;top:240.89999999999998px" width="18" height="18" viewBox="0 0 18 18"><circle cx="9" cy="9" r="8.3" fill="#fff" stroke="#c8c8c8" stroke-width="1"/></svg><div class="t" style="left:272.5px;top:242.2px;font-size:13.4px;color:#3c3c3c">Nhóm khoản thu</div>
<svg style="left:134px;top:322px" width="18" height="18" viewBox="0 0 18 18"><circle cx="9" cy="9" r="8.3" fill="#fff" stroke="#c8c8c8" stroke-width="1"/><circle cx="9" cy="9" r="4.3" fill="#14a04f"/></svg><div class="t" style="left:156.5px;top:322.5px;font-size:13.4px;color:#3c3c3c">In theo hình thức thu</div>
<svg style="left:314px;top:322px" width="18" height="18" viewBox="0 0 18 18"><circle cx="9" cy="9" r="8.3" fill="#fff" stroke="#c8c8c8" stroke-width="1"/></svg><div class="t" style="left:336.5px;top:322.5px;font-size:13.4px;color:#3c3c3c">In theo tài khoản</div>
<div class="a" style="left:134px;top:111px;width:440px;height:32px;border:1px solid #dcdcdc;border-radius:4px"></div>
<svg style="left:552px;top:123.5px" width="12" height="8" viewBox="0 0 12 8"><path d="M1.8 1.8l4.2 4.2 4.2-4.2" fill="none" stroke="#38385a" stroke-width="1.55"/></svg>
<div class="t" style="left:145.5px;top:119.5px;font-size:13.4px;color:#1f1f1f">Đợt 1 tháng 12/2020</div>
<div class="a" style="left:134px;top:274px;width:440px;height:32px;border:1px solid #dcdcdc;border-radius:4px"></div>
<svg style="left:553px;top:286px" width="12" height="8" viewBox="0 0 12 8"><path d="M1.8 1.8l4.2 4.2 4.2-4.2" fill="none" stroke="#38385a" stroke-width="1.55"/></svg>
<div class="a" style="left:139.3px;top:278px;width:73.2px;height:24px;background:#ececec;border-radius:3px"></div>
<div class="t" style="left:145.3px;top:282px;font-size:13.4px;color:#444">Học phí</div>
<svg style="left:197.5px;top:286px" width="9" height="9" viewBox="0 0 9 9"><path d="M1.5 1.5l6 6M7.5 1.5l-6 6" stroke="#9d9d9d" stroke-width="2.6" stroke-linecap="round"/></svg>
<div class="a" style="left:217.1px;top:278px;width:85.7px;height:24px;background:#ececec;border-radius:3px"></div>
<div class="t" style="left:223.1px;top:282px;font-size:13.4px;color:#444">Học nghề</div>
<svg style="left:287.8px;top:286px" width="9" height="9" viewBox="0 0 9 9"><path d="M1.5 1.5l6 6M7.5 1.5l-6 6" stroke="#9d9d9d" stroke-width="2.6" stroke-linecap="round"/></svg>
<div class="a" style="left:307.3px;top:278px;width:86.4px;height:24px;background:#ececec;border-radius:3px"></div>
<div class="t" style="left:313.3px;top:282px;font-size:13.4px;color:#444">Học thêm</div>
<svg style="left:378.7px;top:286px" width="9" height="9" viewBox="0 0 9 9"><path d="M1.5 1.5l6 6M7.5 1.5l-6 6" stroke="#9d9d9d" stroke-width="2.6" stroke-linecap="round"/></svg>
<div class="a" style="left:398.1px;top:278px;width:93.7px;height:24px;background:#ececec;border-radius:3px"></div>
<div class="t" style="left:404.1px;top:282px;font-size:13.4px;color:#444">Nước uống</div>
<svg style="left:476.8px;top:286px" width="9" height="9" viewBox="0 0 9 9"><path d="M1.5 1.5l6 6M7.5 1.5l-6 6" stroke="#9d9d9d" stroke-width="2.6" stroke-linecap="round"/></svg>
<div class="a" style="left:541px;top:274.8px;width:7.5px;height:16.5px;background:#bdbdbd;border-radius:4px"></div>
<div class="a" style="left:134px;top:355px;width:440px;height:32px;border:1px solid #dcdcdc;border-radius:4px"></div>
<svg style="left:552px;top:367px" width="12" height="8" viewBox="0 0 12 8"><path d="M1.8 1.8l4.2 4.2 4.2-4.2" fill="none" stroke="#38385a" stroke-width="1.55"/></svg>
<svg style="left:134px;top:403px" width="18" height="18" viewBox="0 0 18 18"><rect x="0" y="0" width="18" height="18" rx="3" fill="#14a04f"/><path d="M4.5 9.2l3 3 6-6" fill="none" stroke="#fff" stroke-width="1.8"/></svg><div class="t" style="left:156.5px;top:403.5px;font-size:13.4px;color:#3c3c3c">Mỗi lớp 1 danh sách</div>
<svg style="left:294px;top:403px" width="18" height="18" viewBox="0 0 18 18"><rect x="0.5" y="0.5" width="17" height="17" rx="3" fill="#fff" stroke="#c8c8c8" stroke-width="1"/></svg><div class="t" style="left:316.5px;top:403.5px;font-size:13.4px;color:#3c3c3c">Hiển thị số lượng thu</div>
<svg style="left:134px;top:436px" width="18" height="18" viewBox="0 0 18 18"><rect x="0.5" y="0.5" width="17" height="17" rx="3" fill="#fff" stroke="#c8c8c8" stroke-width="1"/></svg><div class="t" style="left:156.5px;top:436.5px;font-size:13.4px;color:#3c3c3c">Mỗi hình thức/tài khoản 1 danh sách</div>
<svg style="left:137px;top:463px" width="18" height="19" viewBox="0 0 18 19"><path d="M1.8 17.5l1-4.8L12.6 2.9c0.9-0.9 2.2-0.9 3 0c0.8 0.8 0.8 2.1 0 2.9L5.8 15.6z M10.8 4.7l3 3" fill="none" stroke="#1a8fe3" stroke-width="1.5" stroke-linejoin="round"/></svg>
<div class="t" style="left:162px;top:465.8px;font-size:13.5px;color:#1a8fe3">Tùy chỉnh hiển thị chữ ký</div>
<div class="a" style="left:372px;top:564px;width:96px;height:32px;border:1px solid #dadada;border-radius:4px;background:#fff"></div>
<div class="t" style="left:372px;top:572.6px;width:96px;text-align:center;font-size:13.2px;color:#35355a">Đóng</div>
<div class="a" style="left:476px;top:564px;width:100px;height:32px;border-radius:4px;background:#14a04f"></div>
<div class="t" style="left:476px;top:572.6px;width:100px;text-align:center;font-size:13.1px;-webkit-text-stroke:0.4px #fff;color:#fff">Lấy dữ liệu</div>
</div>
</body></html>
